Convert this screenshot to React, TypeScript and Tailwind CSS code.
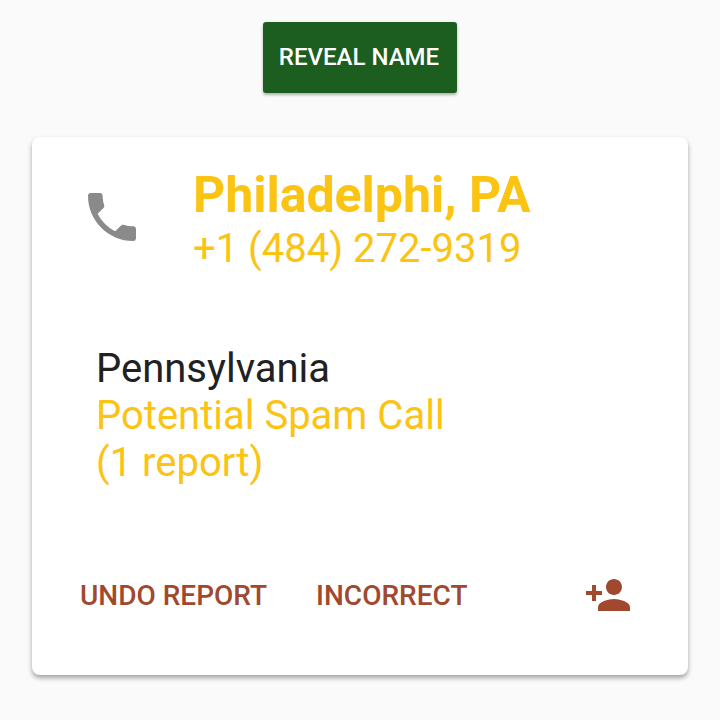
import { MdPersonAdd, MdPhone } from "react-icons/md";

export default function App() {
  return (
    <div className="flex h-[720px] w-[720px] flex-col items-center overflow-hidden bg-[#fafafa] font-['Roboto',sans-serif]">
      <button
        type="button"
        className="mt-[22px] flex h-[71px] w-[194px] items-center justify-center rounded-[3px] bg-[#1b5e20] pb-[1px] pr-[2px] text-[24px] font-medium text-white shadow-[0_2px_3px_rgba(0,0,0,0.3)]"
      >
        REVEAL NAME
      </button>

      <div className="mt-[44px] flex h-[538px] w-[656px] flex-col rounded-[8px] bg-white shadow-[0_3px_5px_rgba(0,0,0,0.35)]">
        <div className="flex pl-[48px] pt-[32px]">
          <MdPhone className="mt-[16px] h-[64px] w-[64px] text-[#8a8a8a]" />
          <div className="ml-[49px]">
            <div className="text-[50px] font-bold leading-[52px] text-[#fbc312]">Philadelphi, PA</div>
            <div className="mt-[5px] text-[40px] leading-[46px] text-[#fbc312]">+1 (484) 272-9319</div>
          </div>
        </div>

        <div className="mt-[73px] pl-[64px] text-[40px] leading-[47px]">
          <div className="text-[#212121]">Pennsylvania</div>
          <div className="text-[#fbc312]">Potential Spam Call</div>
          <div className="text-[#fbc312]">(1 report)</div>
        </div>

        <div className="mt-[85px] flex items-center pl-[48px] text-[28px] font-medium text-[#a0492f]">
          <span>UNDO REPORT</span>
          <span className="ml-[49px]">INCORRECT</span>
          <MdPersonAdd className="mb-[2px] ml-[117px] h-[48px] w-[48px]" />
        </div>
      </div>
    </div>
  );
}
